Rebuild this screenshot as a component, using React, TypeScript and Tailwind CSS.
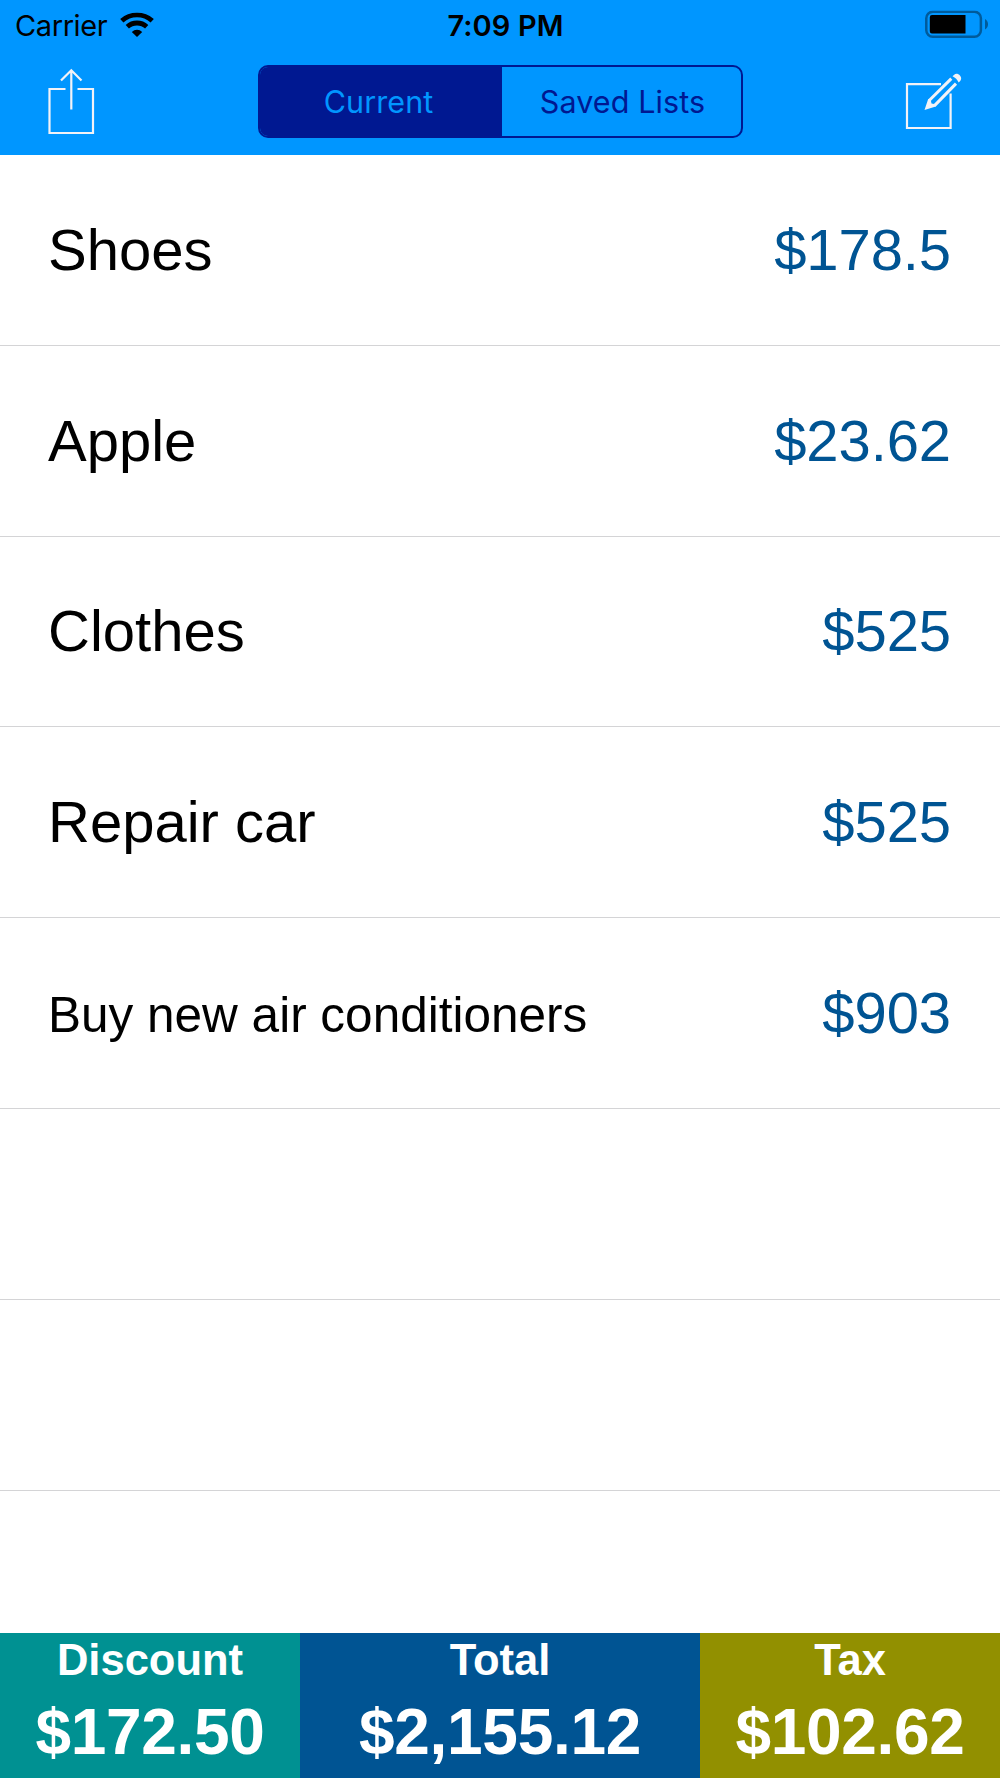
interface Item {
  name: string;
  price: string;
  small?: boolean;
}

const items: Item[] = [
  { name: "Shoes", price: "$178.5" },
  { name: "Apple", price: "$23.62" },
  { name: "Clothes", price: "$525" },
  { name: "Repair car", price: "$525" },
  { name: "Buy new air conditioners", price: "$903", small: true },
];

const summary = [
  { label: "Discount", value: "$172.50", cls: "w-[300px] bg-[#009192]" },
  { label: "Total", value: "$2,155.12", cls: "w-[400px] bg-[#005493]" },
  { label: "Tax", value: "$102.62", cls: "w-[300px] bg-[#929000]" },
];

function StatusBar() {
  return (
    <div className="grid h-[50px] grid-cols-3 items-center text-[29px] leading-none text-black">
      <div className="flex items-center pl-[15px]">
        <span className="tracking-[-0.4px]">Carrier</span>
        <svg className="ml-[13px] h-[25px] w-[34px] -translate-y-[0.5px]" viewBox="0 0 34 25" fill="none" stroke="black">
          <path d="M1.8 8.2a22.5 22.5 0 0 1 30.4 0" strokeWidth="4.8" />
          <path d="M7.3 14.3a14.3 14.3 0 0 1 19.4 0" strokeWidth="4.8" />
          <path d="M17 24.6l-5.2-5.2a7.6 7.6 0 0 1 10.4 0z" fill="black" stroke="none" />
        </svg>
      </div>
      <span className="pl-[11px] text-center font-semibold tracking-[0.1px]">7:09 PM</span>
      <div className="flex justify-end pr-[12px]">
        <svg className="h-[28px] w-[63px] -translate-y-[0.5px]" viewBox="0 0 63 28">
          <rect x="1.3" y="1.3" width="54.6" height="25" rx="6.5" fill="none" stroke="#005b9b" strokeWidth="2.5" />
          <path d="M7 4.5H40.500v18.500H7A2.200 2.200 0 0 1 4.800 20.800V6.700A2.200 2.200 0 0 1 7 4.500z" fill="black" />
          <path d="M60 8.500c4 2 4 8.500 0 10.500z" fill="#005b9b" />
        </svg>
      </div>
    </div>
  );
}

function NavBar() {
  return (
    <div className="flex items-start justify-between pl-[47px] pr-[39px]">
      <button title="Share" className="mt-[18px]">
        <svg className="h-[68px] w-[49px]" viewBox="0 0 49 68" fill="none" stroke="#f2f2f7" strokeWidth="2.2">
          <path d="M18.5 21H2.5v44H46V21H30.5M24.3 41.5V2.5M14 12.5L24.3 2.2L34.5 12.5" />
        </svg>
      </button>
      <div className="mt-[15px] flex h-[73px] w-[485px] overflow-hidden rounded-[10px] border-2 border-[#001891] text-[30.5px] leading-none">
        <button className="w-[242px] bg-[#001891] pt-px pr-[4px] tracking-[0.1px] text-[#0096ff]">Current</button>
        <button className="flex-1 pt-px pl-[3px] tracking-[0.1px] text-[#001891]">Saved Lists</button>
      </div>
      <button title="Edit" className="mt-[21px]">
        <svg className="h-[60px] w-[58px] -mr-px" viewBox="0 0 58 60" fill="none" stroke="#f2f2f7" strokeWidth="2.2">
          <path d="M37 13.2H3v43.800h43.600V22.500" />
          {/* pencil barrel, tip and eraser */}
          <path d="M47.300 7.600L25.200 29.500M52 12.600L30.500 34.600" strokeWidth="3" />
          <path d="M20.500 39l3.700-11 2.500.500.800 4 4 .800.300 2.300z" fill="#f2f2f7" stroke="none" />
          <path d="M48.500 5.200l1.700-1.500c3.500-3 9 2.500 6.200 6L54.700 11.400c-1.500-3-3.200-4.800-6.200-6.200z" fill="#f2f2f7" stroke="none" />
        </svg>
      </button>
    </div>
  );
}

export default function App() {
  return (
    <div className="flex h-[1778px] w-[1000px] flex-col overflow-hidden bg-white">
      <header className="h-[155px] shrink-0 bg-[#0096ff] font-['Inter',sans-serif]">
        <StatusBar />
        <NavBar />
      </header>

      <main className="min-h-0 flex-1 overflow-hidden font-['Liberation_Sans',Arial,sans-serif]">
        {items.map((item) => (
          <div key={item.name} className="flex h-[190.8px] items-center justify-between border-b border-[#d4d4d6] pr-[49px] pl-[48px] leading-none">
            <span className={item.small ? "pt-[3px] text-[49.5px] text-black" : "text-[58px] text-black"}>{item.name}</span>
            <span className="text-[58px] tracking-[-0.1px] text-[#005493]">{item.price}</span>
          </div>
        ))}
        <div className="h-[190.8px] border-b border-[#d4d4d6]" />
        <div className="h-[190.8px] border-b border-[#d4d4d6]" />
      </main>

      <footer className="flex h-[145px] shrink-0 font-['Liberation_Sans',Arial,sans-serif] font-bold text-white">
        {summary.map(({ label, value, cls }) => (
          <div key={label} className={`flex flex-col items-center ${cls}`}>
            <span className="mt-[3px] text-[43.5px] leading-[48px]">{label}</span>
            <span className="mt-[14px] text-[64px] leading-[68px] tracking-[-0.3px]">{value}</span>
          </div>
        ))}
      </footer>
    </div>
  );
}
